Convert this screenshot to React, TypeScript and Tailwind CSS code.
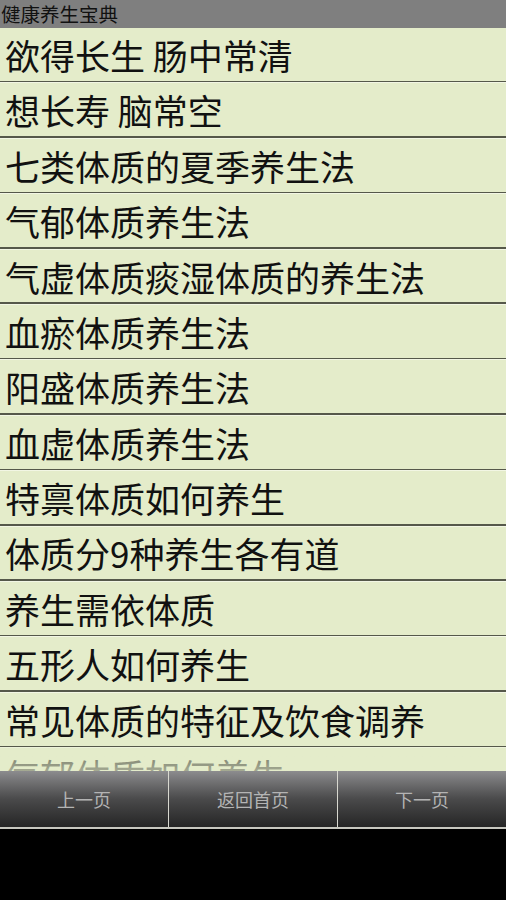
const items = [
  "欲得长生 肠中常清",
  "想长寿 脑常空",
  "七类体质的夏季养生法",
  "气郁体质养生法",
  "气虚体质痰湿体质的养生法",
  "血瘀体质养生法",
  "阳盛体质养生法",
  "血虚体质养生法",
  "特禀体质如何养生",
  "体质分9种养生各有道",
  "养生需依体质",
  "五形人如何养生",
  "常见体质的特征及饮食调养",
  "气郁体质如何养生",
];

const font = { fontFamily: '"Noto Sans CJK SC", "Noto Sans", sans-serif' };

export default function App() {
  return (
    <div className="w-[506px] h-[900px] bg-black flex flex-col overflow-hidden" style={font}>
      <div className="h-[28px] shrink-0 bg-[#7f7f7f] flex items-center pl-[1px]">
        <span className="text-[19.5px] leading-none text-[#111]">健康养生宝典</span>
      </div>

      <div className="relative h-[743px] shrink-0 bg-[#e4ecca] overflow-hidden">
        <ul className="flex flex-col">
          {items.map((t) => (
            <li key={t} className="h-[55.4px] shrink-0 flex flex-col">
              <div className="flex-1 flex items-center pl-[5px]">
                <span className="text-[35px] leading-none text-[#111] whitespace-nowrap">{t}</span>
              </div>
              <div className="h-[1.5px] bg-[#55584a]" />
              <div className="h-[1px] bg-[#f2f6e4]" />
            </li>
          ))}
        </ul>
        <div className="absolute left-0 right-0 bottom-0 h-[24px] bg-gradient-to-b from-[#e4ecca]/40 to-[#e4ecca]/70" />
      </div>

      <div className="h-[58px] shrink-0 flex flex-col">
        <div className="flex-1 flex">
          {["上一页", "返回首页", "下一页"].map((t, i) => (
            <button
              key={t}
              className={
                "flex-1 flex items-center justify-center bg-gradient-to-b from-[#8c8c8e] via-[#4a4a4b] to-[#262626] text-[18px] leading-none text-[#b4b4b4] " +
                (i > 0 ? "border-l border-[#d8d8d0]" : "")
              }
            >
              {t}
            </button>
          ))}
        </div>
        <div className="h-[2px] bg-[#c8c8c0]" />
      </div>
    </div>
  );
}
